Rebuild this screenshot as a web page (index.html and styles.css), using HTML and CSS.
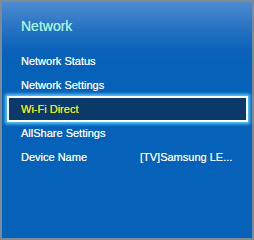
FILE: index.html
```html
<!DOCTYPE html>
<html lang="en">

<head>
    <meta charset="UTF-8">
    <meta name="viewport" content="width=device-width, initial-scale=1.0">
    <title>Network</title>
    <link rel="stylesheet" href="styles.css">
</head>

<body>
    <div class="panel">
        <h1 class="title">Network</h1>
        <ul class="menu">
            <li class="item">Network Status</li>
            <li class="item">Network Settings</li>
            <li class="item selected">Wi-Fi Direct</li>
            <li class="item">AllShare Settings</li>
            <li class="item">
                <span class="label">Device Name</span>
                <span class="value">[TV]Samsung LE...</span>
            </li>
        </ul>
    </div>
</body>

</html>
```

FILE: styles.css
```css
* {
    box-sizing: border-box;
    margin: 0;
    padding: 0;
    font-family: "Liberation Sans", Arial, sans-serif;
}

body {
    width: 254px;
    height: 240px;
    overflow: hidden;
}

.panel {
    width: 254px;
    height: 240px;
    border: 2px solid #7d8b99;
    padding-top: 16px;
    background: linear-gradient(180deg, #4c8bcf 0px, #2a74c4 24px, #0d64ba 46px, #0661b8 60px, #0661b8 100%);
    color: #f2f6ff;
}

.title {
    font-size: 14px;
    line-height: 16px;
    font-weight: normal;
    color: #a2f2e0;
    padding-left: 19px;
    margin-bottom: 15px;
    text-shadow: 0 0 0.5px #a2f2e0;
}

.menu {
    list-style: none;
}

.item {
    display: flex;
    height: 24px;
    line-height: 22px;
    font-size: 11px;
    margin: 0 4px 0 5px;
    padding-left: 13px;
    border: 1px solid transparent;
    white-space: nowrap;
    text-shadow: 0 0 0.5px #f2f6ff;
}

.item.selected {
    height: 26px;
    line-height: 22px;
    margin-top: -1px;
    margin-bottom: -1px;
    background: #0b396a;
    border: 2px solid #ffffff;
    padding-left: 12px;
    color: #f0e41c;
    text-shadow: 0 0 0.5px #f0e41c;
    box-shadow: 0 0 3px 2px #58c8ff;
}

.label {
    width: 119px;
}
```
